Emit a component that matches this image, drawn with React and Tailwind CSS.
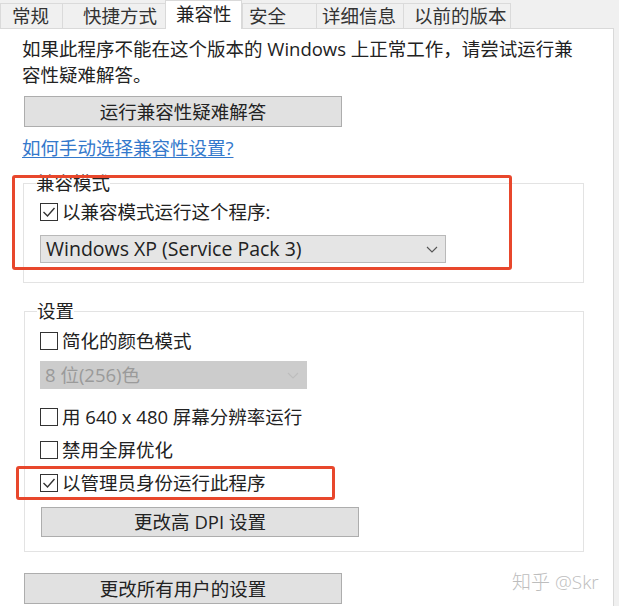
import React from "react"

const tabs = [
    { label: "常规", w: "w-[62px]", pl: "pl-[11px]" },
    { label: "快捷方式", w: "w-[103px]", pl: "pl-[20px]" },
    { label: "兼容性", w: "w-[77px]", pl: "pl-[10px]", active: true },
    { label: "安全", w: "w-[74px]", pl: "pl-[6px]" },
    { label: "详细信息", w: "w-[87px]", pl: "pl-[5px]" },
    { label: "以前的版本", w: "w-[108px]", pl: "pl-[10px]", last: true },
]

function Box({ checked }) {
    return (
        <span className="w-[18px] h-[18px] border border-[#333] bg-white flex items-center justify-center shrink-0">
            {checked && (
                <svg width="14" height="12" viewBox="0 0 14 12">
                    <path d="M1.5 6 L5.5 10 L12.5 2" fill="none" stroke="#333" strokeWidth="1.4" />
                </svg>
            )}
        </span>
    )
}

function Check({ checked, label, className = "" }) {
    return (
        <div className={"flex items-center gap-[4px] h-[20px] leading-[20px] " + className}>
            <Box checked={checked} />
            <span>{label}</span>
        </div>
    )
}

function Chevron({ color }) {
    return (
        <svg width="12" height="7" viewBox="0 0 12 7">
            <path d="M1 1 L6 6 L11 1" fill="none" stroke={color} strokeWidth="1.1" />
        </svg>
    )
}

export default function App() {
    return (
        <div className="relative w-[619px] h-[606px] overflow-hidden bg-[#f0f0f0] text-[18.5px] text-[#222] font-[family-name:'Open_Sans','Noto_Sans_CJK_SC',sans-serif]">

            {/* tabs */}
            <div className="flex items-end h-[28px]">
                {tabs.map((t) =>
                    t.active ? (
                        <div key={t.label} className={`${t.w} ${t.pl} relative z-10 h-[29px] -mb-px bg-white border-l border-r border-t border-[#d9d9d9] leading-[26px] whitespace-nowrap`}>
                            {t.label}
                        </div>
                    ) : (
                        <div key={t.label} className={`${t.w} ${t.pl} h-[25px] bg-[#f0f0f0] border-t border-l ${t.last ? "border-r" : ""} border-[#dadada] leading-[24px] text-[#333] whitespace-nowrap`}>
                            {t.label}
                        </div>
                    )
                )}
            </div>

            {/* panel */}
            <div className="w-[614px] h-[578px] bg-white border-t border-r border-[#d9d9d9] pl-[22px]">
                <p className="pt-[7px] leading-[26px] whitespace-nowrap">
                    如果此程序不能在这个版本的 Windows 上正常工作，请尝试运行兼<br />容性疑难解答。
                </p>

                <button className="mt-[8px] ml-[2px] w-[318px] h-[31px] bg-[#e1e1e1] border border-[#adadad] flex items-center justify-center">
                    运行兼容性疑难解答
                </button>

                <div className="mt-[11px] leading-[20px]">
                    <a className="text-[#3479cc] underline underline-offset-2 decoration-[#3479cc]">如何手动选择兼容性设置?</a>
                </div>

                <fieldset className="mt-[15px] ml-px w-[561px] border border-[#e3e3e3] pl-[16px] pt-[9px] pb-[19px]">
                    <legend className="-ml-[4px] leading-[20px]">兼容模式</legend>
                    <Check checked label="以兼容模式运行这个程序:" />
                    <div className="mt-[13px] w-[406px] h-[28px] bg-[#e5e5e5] border border-[#b9b9b9] flex items-center justify-between pl-[5px] pr-[7px] text-[19.5px]">
                        <span>Windows XP (Service Pack 3)</span>
                        <Chevron color="#555" />
                    </div>
                </fieldset>

                <fieldset className="mt-[18px] ml-[2px] w-[560px] border border-[#e3e3e3] pl-[15px] pt-[10px] pb-[14px]">
                    <legend className="-ml-[3px] leading-[20px]">设置</legend>
                    <Check label="简化的颜色模式" />
                    <div className="mt-[10px] w-[267px] h-[28px] bg-[#cccccc] flex items-center justify-between pl-[5px] pr-[8px] text-[#9a9a9a]">
                        <span>8 位(256)色</span>
                        <Chevron color="#bdbdbd" />
                    </div>
                    <Check className="mt-[18px]" label="用 640 x 480 屏幕分辨率运行" />
                    <Check className="mt-[13px]" label="禁用全屏优化" />
                    <Check checked className="mt-[13px]" label="以管理员身份运行此程序" />
                    <button className="mt-[14px] ml-px w-[318px] h-[30px] bg-[#e1e1e1] border border-[#adadad] flex items-center justify-center">
                        更改高 DPI 设置
                    </button>
                </fieldset>

                <button className="mt-[21px] ml-[2px] w-[318px] h-[31px] bg-[#e1e1e1] border border-[#adadad] flex items-center justify-center">
                    更改所有用户的设置
                </button>
            </div>

            {/* annotation boxes */}
            <div className="absolute left-[12px] top-[175px] w-[500px] h-[95px] border-[3px] border-[#e8472c] rounded-[3px]" />
            <div className="absolute left-[16px] top-[466px] w-[319px] h-[34px] border-[3px] border-[#e8472c] rounded-[3px]" />

            {/* watermark */}
            <div className="absolute left-[512px] top-[570px] text-[19px] leading-[24px] text-[#bdbdbd] font-light">知乎 @Skr</div>
        </div>
    )
}
